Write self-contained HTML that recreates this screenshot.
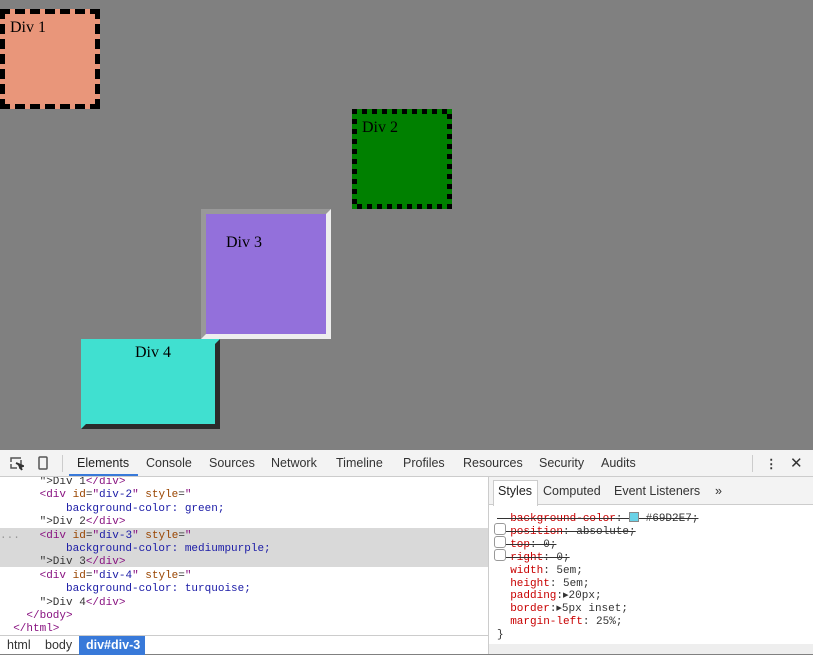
<!DOCTYPE html>
<html><head><style>
*{margin:0;padding:0;box-sizing:border-box}
body{width:813px;height:654px;overflow:hidden;background:#808080;position:relative;font-family:"Liberation Serif",serif;font-size:16px}
.b{position:absolute}
#d1{left:0;top:9px;width:100px;height:100px;background:#E9967A;border:5px dashed #000;padding:5px}
#d2{left:352px;top:109px;width:100px;height:100px;border:5px solid transparent;padding:5px;background:linear-gradient(green,green) padding-box,repeating-conic-gradient(from 270deg,#000 0 25%,green 0 50%) 0 0/10px 10px border-box}
#d3{left:201px;top:209px;width:130px;height:130px;background:mediumpurple;border:5px solid;border-color:#999 #eee #eee #999;padding:20px}
#d4{left:81px;top:339px;width:139px;height:90px;background:turquoise;border:5px solid;border-color:turquoise #2b2b2b #2b2b2b turquoise;padding:0 0 0 49px}
#dt{position:absolute;left:0;top:450px;width:813px;height:204px;background:#fff;font-family:"Liberation Sans",sans-serif;font-size:12.5px;color:#333}
#tb{height:27px;background:#f3f3f3;border-bottom:1px solid #ccc;position:relative}
#tb span{position:absolute;top:6px}
.code{position:absolute;left:0;top:27px;width:488px;font-family:"Liberation Mono",monospace;font-size:11px;line-height:13.4px;white-space:pre;overflow:hidden;height:158px}
.t{color:#881280}.a{color:#994500}.v{color:#1a1aa6}
#sp{position:absolute;left:488px;top:27px;width:325px;height:177px;border-left:1px solid #ccc}
#st{height:28px;background:#f3f3f3;border-bottom:1px solid #ccc;position:relative}
#st span{position:absolute;top:7px}
.rl{font-family:"Liberation Mono",monospace;font-size:11px;line-height:12.9px;white-space:pre;position:absolute;left:8px;top:35px}
.p{color:#c80000}.s{text-decoration:line-through}
.cb{display:block;width:12px;height:12px;border:1px solid #999;border-radius:3px;position:absolute;left:5px;background:#fff}
#bc{position:absolute;left:0;top:185px;width:488px;height:19px;border-top:1px solid #ccc;background:#fff}
#bc span{position:absolute;top:2px}
</style></head><body>
<div class="b" id="d1">Div 1</div>
<div class="b" id="d2">Div 2</div>
<div class="b" id="d3">Div 3</div>
<div class="b" id="d4">Div 4</div>
<div id="dt">
<div id="tb">
<svg class="b" style="left:10px;top:7px" width="14" height="14"><rect x="1" y="1" width="10" height="10" fill="none" stroke="#555" stroke-width="1.5" stroke-dasharray="10 2"/><path d="M6 6 L13 9 L10 10 L12 13" stroke="#333" stroke-width="2" fill="#333"/></svg>
<svg class="b" style="left:38px;top:6px" width="10" height="14"><rect x="1" y="1" width="8" height="12" rx="1" fill="none" stroke="#555" stroke-width="1.5"/></svg>
<div class="b" style="left:62px;top:5px;width:1px;height:17px;background:#ccc"></div>
<span style="left:77px;color:#222">Elements</span>
<div class="b" style="left:69px;top:24px;width:69px;height:2px;background:#3879d9"></div>
<span style="left:146px">Console</span><span style="left:209px">Sources</span><span style="left:271px">Network</span><span style="left:336px">Timeline</span><span style="left:403px">Profiles</span><span style="left:463px">Resources</span><span style="left:539px">Security</span><span style="left:601px">Audits</span>
<div class="b" style="left:752px;top:5px;width:1px;height:17px;background:#ccc"></div>
<span style="left:765px;font-weight:bold">⋮</span><span style="left:790px;font-size:15px;top:4px">✕</span>
</div>
<div class="code"><div style="position:absolute;left:0;top:51px;width:488px;height:39px;background:#d9d9d9"></div><div style="position:relative;margin-top:-1px">      "&gt;Div 1<span class="t">&lt;/div&gt;</span>
      <span class="t">&lt;div</span> <span class="a">id</span>=<span class="t">"</span><span class="v">div-2</span><span class="t">"</span> <span class="a">style</span>=<span class="t">"</span>
          <span class="v">background-color: green;</span>
      "&gt;Div 2<span class="t">&lt;/div&gt;</span>
<span style="color:#999">...</span>   <span class="t">&lt;div</span> <span class="a">id</span>=<span class="t">"</span><span class="v">div-3</span><span class="t">"</span> <span class="a">style</span>=<span class="t">"</span>
          <span class="v">background-color: mediumpurple;</span>
      "&gt;Div 3<span class="t">&lt;/div&gt;</span>
      <span class="t">&lt;div</span> <span class="a">id</span>=<span class="t">"</span><span class="v">div-4</span><span class="t">"</span> <span class="a">style</span>=<span class="t">"</span>
          <span class="v">background-color: turquoise;</span>
      "&gt;Div 4<span class="t">&lt;/div&gt;</span>
    <span class="t">&lt;/body&gt;</span>
  <span class="t">&lt;/html&gt;</span></div></div>
<div id="sp">
<div id="st"><div class="b" style="left:4px;top:3px;width:45px;height:26px;background:#fff;border:1px solid #ccc;border-bottom:none"></div><span style="left:9px;color:#222">Styles</span><span style="left:54px">Computed</span><span style="left:125px">Event Listeners</span><span style="left:226px">»</span></div>
<div class="rl"><span class="s"><span class="p">  background-color</span>: <span style="display:inline-block;width:10px;height:10px;background:#69D2E7;border:1px solid #888;vertical-align:-1px"></span> #69D2E7;</span>
<span class="s"><span class="p">  position</span>: absolute;</span>
<span class="s"><span class="p">  top</span>: 0;</span>
<span class="s"><span class="p">  right</span>: 0;</span>
<span class="p">  width</span>: 5em;
<span class="p">  height</span>: 5em;
<span class="p">  padding</span>:▸20px;
<span class="p">  border</span>:▸5px inset;
<span class="p">  margin-left</span>: 25%;
}</div>
<span class="cb" style="top:46px"></span><span class="cb" style="top:59px"></span><span class="cb" style="top:72px"></span>
<div class="b" style="left:0;top:167px;width:325px;height:10px;background:#eee"></div>
</div>
<div id="bc"><span style="left:7px">html</span><span style="left:45px">body</span><div class="b" style="left:79px;top:0;width:66px;height:19px;background:#3879d9"></div><span style="left:86px;color:#fff;font-weight:bold">div#div-3</span></div>
</div>
</body></html>
